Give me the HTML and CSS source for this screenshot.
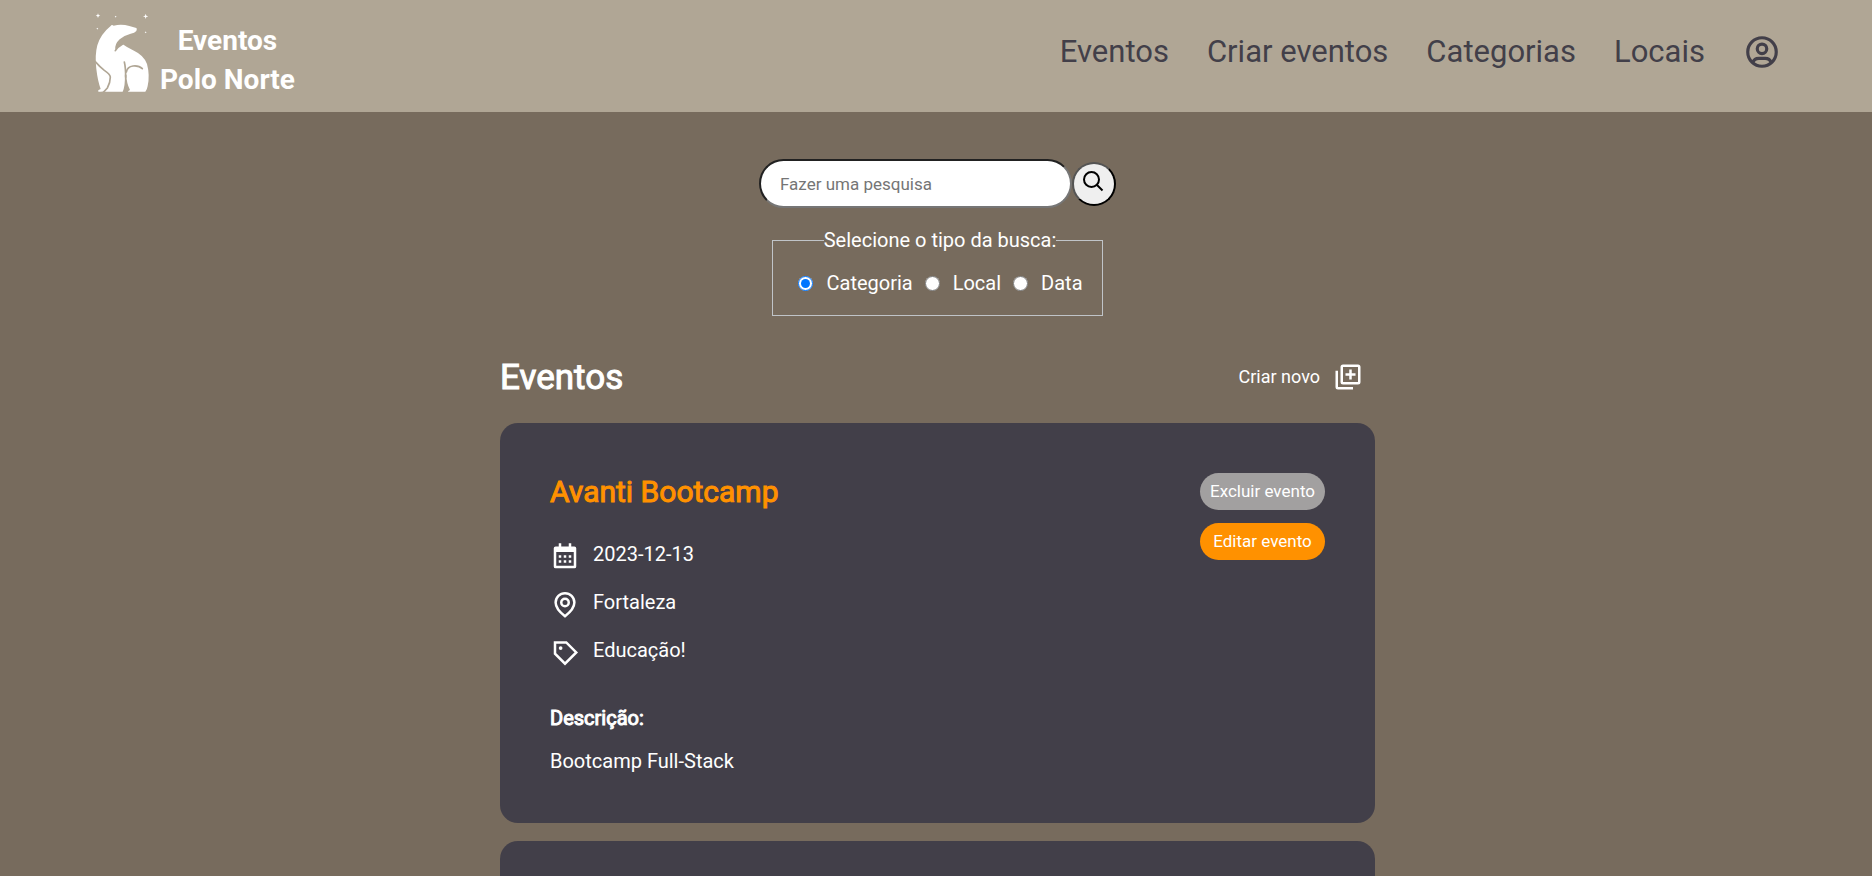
FILE: index.html
```html
<!DOCTYPE html>
<html lang="pt-BR">
<head>
<meta charset="utf-8">
<meta name="viewport" content="width=device-width, initial-scale=1">
<title>Eventos Polo Norte</title>
<link rel="stylesheet" href="styles.css">
</head>
<body>
<header class="header">
  <a class="logo" href="#">
    <svg class="logo-bear" viewBox="0 0 210 270" aria-hidden="true">
      <g fill="#fff">
        <path d="M62 54Q65 49 71 53Q94 47 118 54L139 60Q142 62 139 69Q134 76 122 77Q102 82 89 94Q74 108 76 124Q84 116 97 108Q112 119 132 128Q162 142 171 168Q180 202 173 234Q171 246 166 251H44Q42 249 45 246L52 243L46 248Q40 252 26 251Q22 249 26 246L32 243Q23 218 19 183Q14 142 22 112Q32 78 62 54Z"/>
        <path d="M24 16l2 5 5 2-5 2-2 5-2-5-5-2 5-2zM167 17l2 6 6 2-6 2-2 6-2-6-6-2 6-2zM77 23l1 2 2 1-2 1-1 2-1-2-2-1 2-1zM22 59l1 2 2 1-2 1-1 2-1-2-2-1 2-1zM167 70l1 2 2 1-2 1-1 2-1-2-2-1 2-1z"/>
      </g>
      <g fill="none" stroke="#b0a695" stroke-width="5" stroke-linecap="round">
        <path d="M15 160Q31 178 43 187Q60 198 61 207Q61 224 52 240L40 253"/>
        <path d="M76 128Q82 117 98 108"/>
        <path d="M103 162Q107 178 107 208"/>
        <path d="M109 192Q112 176 129 174Q147 172 157 182"/>
      </g>
      <path d="M104.500 200Q106 236 97 254H113Q114 248 120 246Q109 224 109.500 200Z" fill="#b0a695"/>
    </svg>
    <span class="logo-text">Eventos<br>Polo Norte</span>
  </a>
  <nav class="nav">
    <a href="#">Eventos</a>
    <a href="#">Criar eventos</a>
    <a href="#">Categorias</a>
    <a href="#">Locais</a>
    <a class="nav-user" href="#" aria-label="Perfil">
      <svg viewBox="0 0 24 24" fill="none" stroke="currentColor" stroke-width="2"><circle cx="12" cy="12" r="9"/><circle cx="12" cy="10" r="3"/><path d="M6.2 18.7a4 4 0 0 1 3.8-2.7h4a4 4 0 0 1 3.8 2.7"/></svg>
    </a>
  </nav>
</header>
<main class="main">
  <form class="search">
    <div class="search-row">
      <input class="search-input" type="text" placeholder="Fazer uma pesquisa" aria-label="Fazer uma pesquisa">
      <button class="search-button" type="button" aria-label="Pesquisar">
        <svg viewBox="0 0 24 24" fill="none" stroke="currentColor" stroke-width="2"><circle cx="9.500" cy="9.500" r="7.500"/><path d="M15 15l5.500 5.500"/></svg>
      </button>
    </div>
    <fieldset class="search-type">
      <legend>Selecione o tipo da busca:</legend>
      <input type="radio" name="tipo" id="categoria" checked><label for="categoria">Categoria</label>
      <input type="radio" name="tipo" id="local"><label for="local">Local</label>
      <input type="radio" name="tipo" id="data"><label for="data">Data</label>
    </fieldset>
  </form>
  <section class="events">
    <div class="events-head">
      <h1>Eventos</h1>
      <a class="create" href="#">Criar novo
        <svg viewBox="0 0 24 24" fill="none" stroke="currentColor" stroke-width="2"><rect x="7" y="3" width="14" height="14" rx="1"/><path d="M3 7v13a1 1 0 0 0 1 1h12M14 6v8M10 10h8"/></svg>
      </a>
    </div>
    <article class="card">
      <div class="card-info">
        <h2>Avanti Bootcamp</h2>
        <ul class="details">
          <li><svg viewBox="0 0 24 24" fill="currentColor"><path fill-rule="evenodd" d="M7 1h2v2.500h6V1h2v2.500h2.500A1.500 1.500 0 0 1 21 5v14.500a1.500 1.500 0 0 1-1.500 1.500h-15A1.500 1.500 0 0 1 3 19.500V5a1.500 1.500 0 0 1 1.500-1.500H7zM5 8v11h14V8z"/><path d="M7 10.500h2v2H7zM11 10.500h2v2h-2zM15 10.500h2v2h-2zM7 14.500h2v2H7zM11 14.500h2v2h-2zM15 14.500h2v2h-2z"/></svg>2023-12-13</li>
          <li><svg viewBox="0 0 24 24" fill="none" stroke="currentColor" stroke-width="2"><path d="M12 21C7.500 17.500 4.500 14 4.500 10a7.500 7.500 0 0 1 15 0c0 4-3 7.500-7.500 11z"/><circle cx="12" cy="10" r="3"/></svg>Fortaleza</li>
          <li><svg viewBox="0 0 24 24" fill="none" stroke="currentColor" stroke-width="2"><path d="M4 3.500h9l8 8-9 9-8-8z"/><circle cx="8.500" cy="8" r="1.500" fill="currentColor" stroke="none"/></svg>Educação!</li>
        </ul>
        <h3>Descrição:</h3>
        <p>Bootcamp Full-Stack</p>
      </div>
      <div class="card-actions">
        <button class="pill" type="button">Excluir evento</button>
        <button class="pill pill-edit" type="button">Editar evento</button>
      </div>
    </article>
    <article class="card card-next"></article>
  </section>
</main>
</body>
</html>
```
FILE: styles.css
```css
* { box-sizing: border-box; margin: 0; padding: 0; }
body {
  background: #776b5d;
  color: #fff;
  font-family: Roboto, "Liberation Sans", sans-serif;
  font-size: 20px;
  line-height: 24px;
}
a { color: inherit; text-decoration: none; }
svg { display: block; flex: none; }

.header {
  display: flex;
  justify-content: space-between;
  align-items: flex-start;
  padding: 8px 91px 13px 90px;
  background: #b0a695;
}
.logo { display: flex; }
.logo-bear { width: 70px; height: 90px; }
.logo-text {
  padding-top: 13px;
  font: bold 28px/39px Roboto, sans-serif;
  text-align: center;
}
.nav {
  display: flex;
  align-items: center;
  gap: 38px;
  height: 88px;
  color: #423f49;
  font-size: 31px;
  line-height: 38px;
}
.nav-user svg { width: 38px; height: 38px; }

.main { padding: 47px 0 0 3px; }
.search { display: flex; flex-direction: column; align-items: center; }
.search-row { display: flex; align-items: center; }
.search-input {
  width: 313px;
  height: 49px;
  padding: 0 19px;
  border: 2px inset #767676;
  border-radius: 25px;
  background: #fff;
  font: 17px/20px Roboto, sans-serif;
}
.search-input::placeholder { color: #757575; }
.search-button {
  display: flex;
  justify-content: center;
  width: 44px;
  height: 44px;
  padding-top: 6px;
  border: 2px outset #000;
  border-radius: 50%;
  background: #efefef;
  color: #000;
}
.search-button svg { width: 24px; height: 24px; }
.search-type {
  display: flex;
  align-items: center;
  margin-top: 20px;
  padding: 19px 19px 20px 24px;
  border: 1px solid #c0c4c8;
}
.search-type legend { margin: 0 auto; }
.search-type input { width: 15px; height: 15px; margin: 0 13px 0 1px; }
.search-type label + input { margin-left: 12px; }

.events { width: 875px; max-width: 100%; margin: 36px auto 0; }
.events-head {
  display: flex;
  justify-content: space-between;
  align-items: center;
  height: 50px;
  margin-bottom: 21px;
}
h1, h2, h3 { font-weight: 400; -webkit-text-stroke: 1px currentColor; }
h1 { padding-top: 2px; font-size: 35px; line-height: 42px; }
h2 { font-size: 30px; line-height: 38px; color: #ff9100; }
h3 { font-size: 20px; line-height: 24px; }
.create {
  display: flex;
  align-items: center;
  gap: 13px;
  padding-right: 12px;
  font-size: 18px;
}
.create svg { width: 30px; height: 30px; }
.card {
  display: flex;
  justify-content: space-between;
  min-height: 400px;
  margin-bottom: 18px;
  padding: 50px;
  border-radius: 18px;
  background: #423f49;
}
.card-next { min-height: 35px; margin: 0; padding: 0; border-radius: 18px 18px 0 0; }
.details { display: grid; gap: 18px; margin: 31px 0 38px; list-style: none; }
.details li { display: flex; gap: 13px; min-height: 30px; }
.details svg { width: 30px; height: 30px; }
.card-info p { margin-top: 19px; }
.card-actions { display: flex; flex-direction: column; gap: 13px; }
.pill {
  width: 125px;
  height: 37px;
  padding-bottom: 1px;
  border: 0;
  border-radius: 19px;
  background: #a2a0a0;
  color: #fff;
  font: 17px/20px Roboto, sans-serif;
}
.pill-edit { background: #ff9100; }
```
